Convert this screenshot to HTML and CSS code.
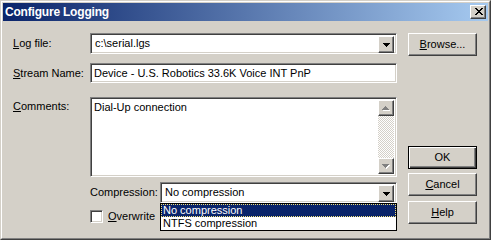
FILE: index.html
```html
<!DOCTYPE html>
<html>
<head>
<meta charset="utf-8">
<link rel="stylesheet" href="styles.css">
</head>
<body>
<div class="window">
  <div class="frame">
    <div class="titlebar">
      <span class="title">Configure Logging</span>
      <span class="close raised">
        <svg width="8" height="7" viewBox="0 0 8 7" shape-rendering="crispEdges">
          <path fill="#000" d="M0 0h2v1H0zM6 0h2v1H6zM1 1h2v1H1zM5 1h2v1H5zM2 2h4v1H2zM3 3h2v1H3zM2 4h4v1H2zM1 5h2v1H1zM5 5h2v1H5zM0 6h2v1H0zM6 6h2v1H6z"/>
        </svg>
      </span>
    </div>
    <div class="main">
      <div class="left">
        <div class="row row-log">
          <span class="lbl"><u>L</u>og file:</span>
          <div class="combo sunken field">
            <span class="val">c:\serial.lgs</span>
            <span class="dd raised">
              <svg width="7" height="4" viewBox="0 0 7 4" shape-rendering="crispEdges"><path fill="#000" d="M0 0h7v1H0zM1 1h5v1H1zM2 2h3v1H2zM3 3h1v1H3z"/></svg>
            </span>
          </div>
        </div>
        <div class="row row-stream">
          <span class="lbl"><u>S</u>tream Name:</span>
          <div class="edit sunken field">Device - U.S. Robotics 33.6K Voice INT PnP</div>
        </div>
        <div class="row row-comments">
          <span class="lbl lbl-top"><u>C</u>omments:</span>
          <div class="memo sunken field">
            <div class="memo-text">Dial-Up connection</div>
            <div class="vscroll">
              <span class="sb raised">
                <svg width="8" height="5" viewBox="0 0 8 5" shape-rendering="crispEdges"><path fill="#fff" d="M4 1h1v1H4zM3 2h3v1H3zM2 3h5v1H2zM1 4h7v1H1z"/><path fill="#808080" d="M3 0h1v1H3zM2 1h3v1H2zM1 2h5v1H1zM0 3h7v1H0z"/></svg>
              </span>
              <span class="track"></span>
              <span class="sb raised">
                <svg width="8" height="5" viewBox="0 0 8 5" shape-rendering="crispEdges"><path fill="#fff" d="M1 1h7v1H1zM2 2h5v1H2zM3 3h3v1H3zM4 4h1v1H4z"/><path fill="#808080" d="M0 0h7v1H0zM1 1h5v1H1zM2 2h3v1H2zM3 3h1v1H3z"/></svg>
              </span>
            </div>
          </div>
        </div>
        <div class="row row-comp">
          <span class="lbl2">Compression:</span>
          <div class="combo-wrap">
            <div class="combo sunken comp">
              <span class="val">No compression</span>
              <span class="dd raised">
                <svg width="7" height="4" viewBox="0 0 7 4" shape-rendering="crispEdges"><path fill="#000" d="M0 0h7v1H0zM1 1h5v1H1zM2 2h3v1H2zM3 3h1v1H3z"/></svg>
              </span>
            </div>
            <ul class="droplist">
              <li class="sel">No compression</li>
              <li>NTFS compression</li>
            </ul>
          </div>
        </div>
        <div class="row row-check">
          <span class="checkbox"></span>
          <span class="chk-label"><u>O</u>verwrite</span>
        </div>
      </div>
      <div class="buttons">
        <div class="btn raised"><span><u>B</u>rowse...</span></div>
        <div class="btn default btn-ok"><span>OK</span></div>
        <div class="btn raised btn-cancel"><span><u>C</u>ancel</span></div>
        <div class="btn raised btn-help"><span><u>H</u>elp</span></div>
      </div>
    </div>
  </div>
</div>
</body>
</html>
```

FILE: styles.css
```css
* { box-sizing: border-box; }

body {
  margin: 0;
  font-family: "Liberation Sans", Arial, sans-serif;
  font-size: 11px;
  line-height: 13px;
  color: #000;
  background: #d4d0c8;
}

u { text-decoration: underline; text-underline-offset: 1px; }

.window {
  width: 491px;
  height: 240px;
  border: 1px solid;
  border-color: #d4d0c8 #404040 #404040 #d4d0c8;
  background: #d4d0c8;
}

.frame {
  height: 100%;
  border: 1px solid;
  border-color: #fff #808080 #808080 #fff;
  padding: 1px;
  display: flex;
  flex-direction: column;
}

.titlebar {
  height: 18px;
  flex: none;
  display: flex;
  align-items: center;
  justify-content: space-between;
  padding: 0 2px;
  background: linear-gradient(to right, #0a246a, #a6caf0);
}

.title {
  color: #fff;
  font-weight: bold;
  font-size: 12px;
  letter-spacing: -0.2px;
}

.raised {
  background: #d4d0c8;
  border: 1px solid;
  border-color: #fff #404040 #404040 #fff;
  box-shadow: inset -1px -1px #808080, inset 1px 1px #d4d0c8;
}

.sunken {
  background: #fff;
  border: 1px solid;
  border-color: #808080 #fff #fff #808080;
  box-shadow: inset 1px 1px #404040, inset -1px -1px #d4d0c8;
}

.close {
  width: 16px;
  height: 14px;
  display: flex;
  align-items: center;
  justify-content: center;
  padding: 0 0 1px 1px;
}

.close svg { display: block; }

.main {
  display: flex;
  padding: 12px 0 0 10px;
}

.left { width: 384px; }

.row { display: flex; align-items: center; }

.lbl { width: 77px; flex: none; }
.lbl-top { align-self: flex-start; padding-top: 3px; }

.field { width: 307px; }

.combo {
  height: 21px;
  display: flex;
  align-items: stretch;
  padding: 2px;
}

.combo .val {
  flex: 1;
  display: flex;
  align-items: center;
  padding-left: 2px;
}

.dd {
  width: 16px;
  height: 17px;
  flex: none;
  display: flex;
  align-items: center;
  justify-content: center;
}

.dd svg { display: block; }

.row-stream { margin-top: 9px; }

.edit {
  height: 20px;
  padding: 2px 3px;
  display: flex;
  align-items: center;
}

.row-comments { margin-top: 14px; }

.memo {
  height: 80px;
  padding: 2px;
  display: flex;
}

.memo-text {
  flex: 1;
  padding: 1px 0 0 1px;
}

.vscroll {
  width: 16px;
  display: flex;
  flex-direction: column;
}

.sb {
  width: 16px;
  height: 16px;
  flex: none;
  display: flex;
  align-items: center;
  justify-content: center;
}

.sb svg { display: block; }

.track {
  flex: 1;
  background: repeating-conic-gradient(#fff 0 25%, #d4d0c8 0 50%) 0 0 / 2px 2px;
}

.row-comp {
  margin-top: 5px;
  margin-left: 77px;
}

.lbl2 { width: 70px; flex: none; }

.combo-wrap { position: relative; }

.comp { width: 237px; }

.droplist {
  position: absolute;
  top: 100%;
  left: 0;
  width: 237px;
  margin: 0;
  padding: 0;
  list-style: none;
  background: #fff;
  border: 1px solid #000;
}

.droplist li {
  height: 13px;
  line-height: 13px;
  padding-left: 2px;
}

.droplist li.sel {
  background: #0a246a;
  color: #fff;
  outline: 1px dotted #f2e27a;
  outline-offset: -1px;
}

.row-check {
  margin-top: 7px;
  margin-left: 77px;
}

.checkbox {
  width: 13px;
  height: 13px;
  flex: none;
  background: #fff;
  border: 1px solid;
  border-color: #808080 #fff #fff #808080;
  box-shadow: inset 1px 1px #404040, inset -1px -1px #d4d0c8;
}

.chk-label { margin-left: 5px; }

.buttons {
  margin-left: 11px;
  width: 69px;
  display: flex;
  flex-direction: column;
}

.btn {
  height: 23px;
  display: flex;
  align-items: center;
  justify-content: center;
}

.btn.default {
  background: #d4d0c8;
  border: 1px solid #000;
  box-shadow: inset 1px 1px #fff, inset -1px -1px #404040, inset -2px -2px #808080;
}

.btn-ok { margin-top: 90px; }
.btn-cancel { margin-top: 4px; }
.btn-help { margin-top: 5px; }
```
